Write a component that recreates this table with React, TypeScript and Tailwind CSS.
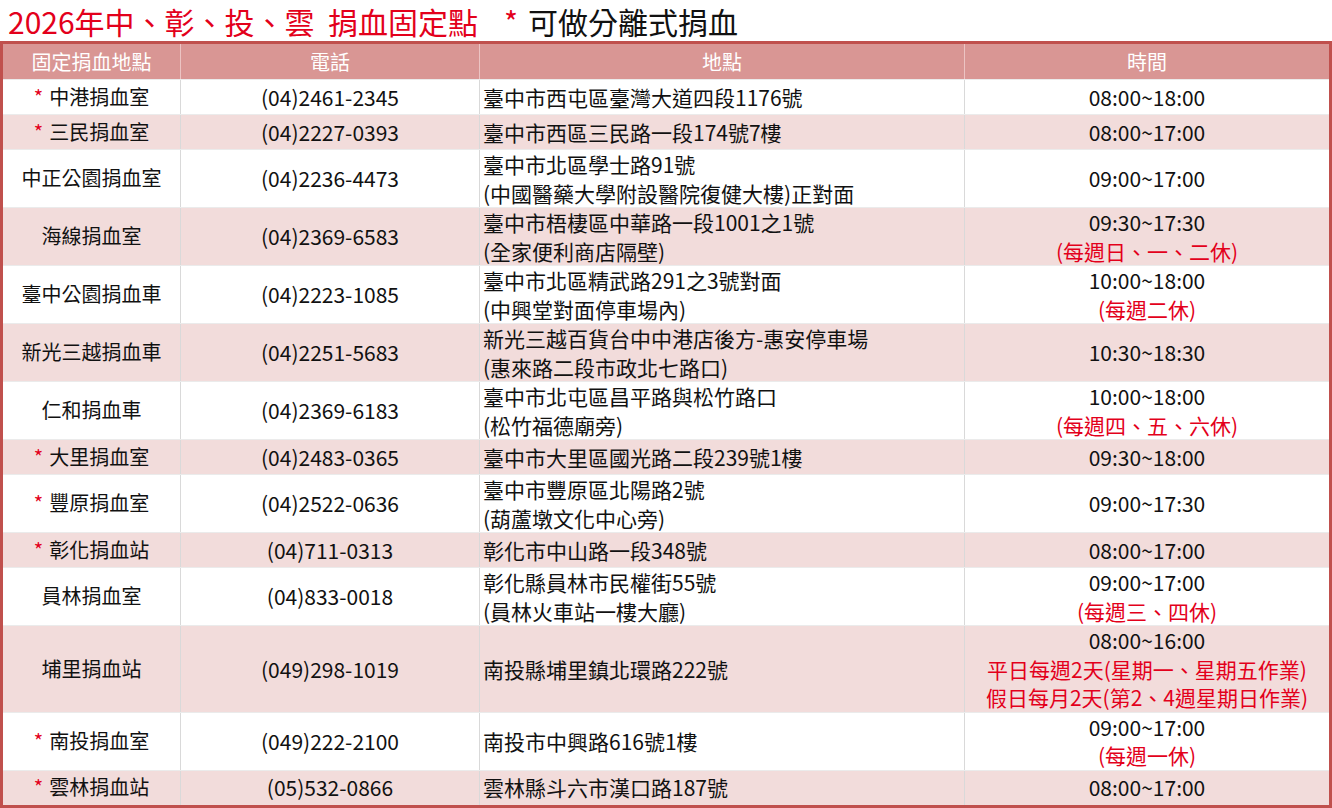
import React from 'react';

type Site = {
  star: boolean;
  name: string;
  phone: string;
  addr: string[];
  time: string;
  notes?: string[];
};

const sites: Site[] = [
  { star: true, name: '中港捐血室', phone: '(04)2461-2345', addr: ['臺中市西屯區臺灣大道四段1176號'], time: '08:00~18:00' },
  { star: true, name: '三民捐血室', phone: '(04)2227-0393', addr: ['臺中市西區三民路一段174號7樓'], time: '08:00~17:00' },
  { star: false, name: '中正公園捐血室', phone: '(04)2236-4473', addr: ['臺中市北區學士路91號', '(中國醫藥大學附設醫院復健大樓)正對面'], time: '09:00~17:00' },
  { star: false, name: '海線捐血室', phone: '(04)2369-6583', addr: ['臺中市梧棲區中華路一段1001之1號', '(全家便利商店隔壁)'], time: '09:30~17:30', notes: ['(每週日、一、二休)'] },
  { star: false, name: '臺中公園捐血車', phone: '(04)2223-1085', addr: ['臺中市北區精武路291之3號對面', '(中興堂對面停車場內)'], time: '10:00~18:00', notes: ['(每週二休)'] },
  { star: false, name: '新光三越捐血車', phone: '(04)2251-5683', addr: ['新光三越百貨台中中港店後方-惠安停車場', '(惠來路二段市政北七路口)'], time: '10:30~18:30' },
  { star: false, name: '仁和捐血車', phone: '(04)2369-6183', addr: ['臺中市北屯區昌平路與松竹路口', '(松竹福德廟旁)'], time: '10:00~18:00', notes: ['(每週四、五、六休)'] },
  { star: true, name: '大里捐血室', phone: '(04)2483-0365', addr: ['臺中市大里區國光路二段239號1樓'], time: '09:30~18:00' },
  { star: true, name: '豐原捐血室', phone: '(04)2522-0636', addr: ['臺中市豐原區北陽路2號', '(葫蘆墩文化中心旁)'], time: '09:00~17:30' },
  { star: true, name: '彰化捐血站', phone: '(04)711-0313', addr: ['彰化市中山路一段348號'], time: '08:00~17:00' },
  { star: false, name: '員林捐血室', phone: '(04)833-0018', addr: ['彰化縣員林市民權街55號', '(員林火車站一樓大廳)'], time: '09:00~17:00', notes: ['(每週三、四休)'] },
  { star: false, name: '埔里捐血站', phone: '(049)298-1019', addr: ['南投縣埔里鎮北環路222號'], time: '08:00~16:00', notes: ['平日每週2天(星期一、星期五作業)', '假日每月2天(第2、4週星期日作業)'] },
  { star: true, name: '南投捐血室', phone: '(049)222-2100', addr: ['南投市中興路616號1樓'], time: '09:00~17:00', notes: ['(每週一休)'] },
  { star: true, name: '雲林捐血站', phone: '(05)532-0866', addr: ['雲林縣斗六市漢口路187號'], time: '08:00~17:00' },
];

const cols = 'grid grid-cols-[178px_299px_485px_1fr]';

export default function App() {
  return (
    <div className="w-[1332px] h-[808px] bg-white text-[21px] text-[#111] font-['Microsoft_JhengHei','Noto_Sans_CJK_TC',sans-serif] overflow-hidden">
      {/* 標題 */}
      <div className="h-[41px] flex items-center pl-[8px] text-[30px] leading-none">
        <span className="text-[#e3001b]">2026年中、彰、投、雲&nbsp;&nbsp;捐血固定點</span>
        <span className="text-[#e3001b] ml-[26px] mr-[10px]">*</span>
        <span className="text-[#111]">可做分離式捐血</span>
      </div>

      <div className="border-[3px] border-[#c0504d]">
        {/* 表頭 */}
        <div className={`${cols} h-[35px] bg-[#d99694] text-white text-[20px]`}>
          <div className="flex items-center justify-center border-r border-[#ecc4c3]">固定捐血地點</div>
          <div className="flex items-center justify-center border-r border-[#ecc4c3]">電話</div>
          <div className="flex items-center justify-center border-r border-[#ecc4c3]">地點</div>
          <div className="flex items-center justify-center">時間</div>
        </div>

        {sites.map((s, i) => (
          <div
            key={s.name}
            className={`${cols} border-t border-[#ebebeb] leading-[28.5px] ${i % 2 === 1 ? 'bg-[#f2dcdb]' : 'bg-white'}`}
          >
            <div className="min-h-[34px] flex items-center justify-center border-r border-[#d9d9d9] text-[20px]">
              {s.star && <span className="text-[#e3001b] mr-[6px]">*</span>}
              {s.name}
            </div>
            <div className="flex items-center justify-center border-r border-[#d9d9d9]">{s.phone}</div>
            <div className="flex flex-col justify-center pl-[3px] border-r border-[#d9d9d9]">
              {s.addr.map((a) => (
                <div key={a}>{a}</div>
              ))}
            </div>
            <div className="flex flex-col items-center justify-center">
              <div>{s.time}</div>
              {s.notes?.map((n) => (
                <div key={n} className="text-[#e3001b]">{n}</div>
              ))}
            </div>
          </div>
        ))}
      </div>
    </div>
  );
}
